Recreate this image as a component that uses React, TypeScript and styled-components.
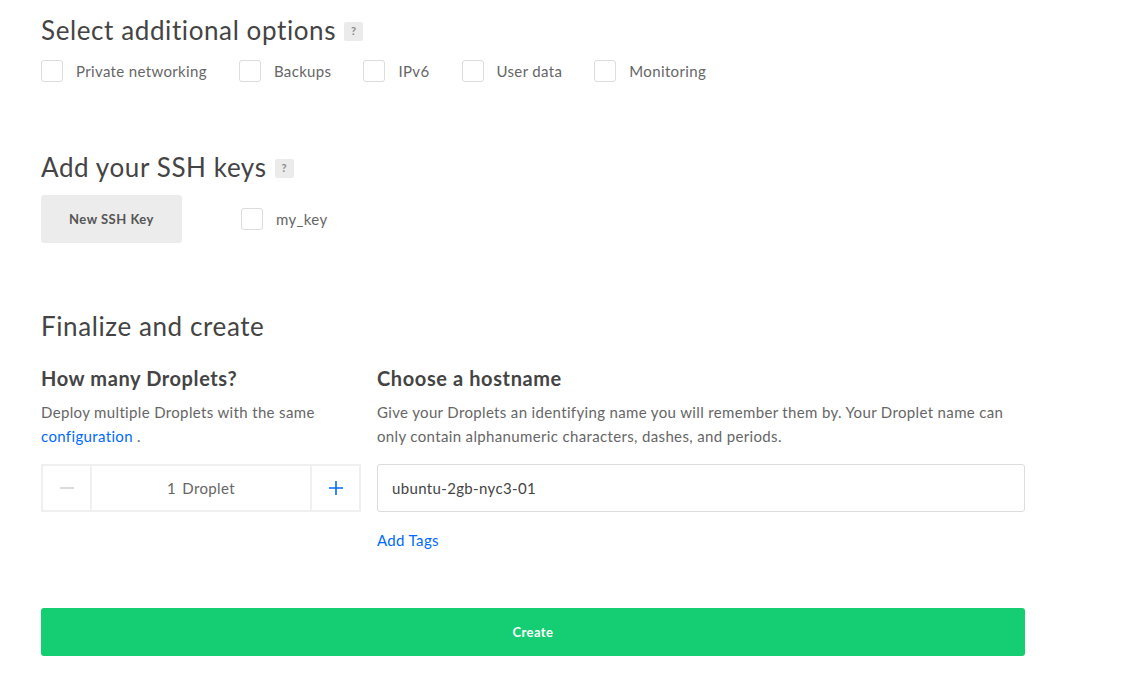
import React from "react";
import styled, { createGlobalStyle } from "styled-components";

const Global = createGlobalStyle`
  html, body { margin: 0; padding: 0; background: #fff; }
  body { font-family: Lato, "Open Sans", "Liberation Sans", sans-serif; color: #444; letter-spacing: 0.35px; }
  * { box-sizing: border-box; }
`;

const Page = styled.div`
  padding-left: 41px;
  width: 1025px;
  display: flex;
  flex-direction: column;
`;

const Title = styled.h2<{ $top: number }>`
  margin: ${(p) => p.$top}px 0 0;
  font-size: 26px;
  line-height: 32px;
  font-weight: 400;
  letter-spacing: 0.6px;
  color: #444;
  display: flex;
  align-items: center;
  gap: 8px;
`;

const Help = styled.span`
  display: inline-flex;
  align-items: center;
  justify-content: center;
  width: 19px;
  height: 19px;
  border-radius: 2px;
  background: #ebebeb;
  color: #8a8a8a;
  font-size: 11px;
  font-weight: 700;
  letter-spacing: 0;
  margin-top: 2px;
`;

const OptionRow = styled.div`
  margin-top: 14px;
  display: flex;
  gap: 32px;
  height: 22px;
`;

const Option = styled.label`
  display: flex;
  align-items: center;
  gap: 13px;
  font-size: 15px;
  color: #666;
`;

const Box = styled.span`
  width: 22px;
  height: 22px;
  border: 1px solid #dcdcdc;
  border-radius: 3px;
  background: #fff;
  flex: none;
`;

const KeyRow = styled.div`
  margin-top: 12px;
  display: flex;
  align-items: center;
  gap: 59px;
`;

const GreyButton = styled.button`
  width: 141px;
  height: 48px;
  border: none;
  border-radius: 3px;
  background: #ececec;
  color: #555;
  font-family: inherit;
  font-size: 13px;
  font-weight: 700;
  letter-spacing: 0.5px;
`;

const Columns = styled.div`
  margin-top: 24px;
  display: grid;
  grid-template-columns: 320px 648px;
  column-gap: 16px;
`;

const Col = styled.div`
  display: flex;
  flex-direction: column;
`;

const SubTitle = styled.h3`
  margin: 0;
  font-size: 20px;
  line-height: 24px;
  font-weight: 700;
  letter-spacing: 0.6px;
  color: #444;
`;

const Desc = styled.p`
  margin: 10px 0 0;
  font-size: 15px;
  line-height: 24px;
  color: #666;
`;

const Link = styled.a`
  color: #0069ff;
  text-decoration: none;
  cursor: pointer;
`;

const Stepper = styled.div`
  margin-top: 16px;
  height: 48px;
  display: grid;
  grid-template-columns: 49px 1fr 49px;
  border: 2px solid #f0f0f0;
`;

const StepBtn = styled.div<{ $side: "l" | "r" }>`
  display: flex;
  align-items: center;
  justify-content: center;
  ${(p) => (p.$side === "l" ? "border-right: 2px solid #f0f0f0;" : "border-left: 2px solid #f0f0f0;")}
`;

const StepValue = styled.div`
  display: flex;
  align-items: center;
  justify-content: center;
  font-size: 15px;
  color: #666;
  word-spacing: 2px;
`;

const HostInput = styled.div`
  margin-top: 16px;
  height: 48px;
  border: 1px solid #dcdcdc;
  border-radius: 3px;
  display: flex;
  align-items: center;
  padding-left: 14px;
  font-size: 15px;
  color: #444;
`;

const TagLink = styled(Link)`
  margin-top: 16px;
  font-size: 15px;
  line-height: 24px;
`;

const CreateButton = styled.button`
  margin-top: 56px;
  width: 984px;
  height: 48px;
  border: none;
  border-radius: 3px;
  background: #15cd72;
  color: #fff;
  font-family: inherit;
  font-size: 13px;
  font-weight: 700;
  letter-spacing: 0.4px;
`;

const options = ["Private networking", "Backups", "IPv6", "User data", "Monitoring"];

export default function App() {
  return (
    <>
      <Global />
      <Page>
        <Title $top={14}>
          Select additional options <Help>?</Help>
        </Title>
        <OptionRow>
          {options.map((o) => (
            <Option key={o}>
              <Box />
              {o}
            </Option>
          ))}
        </OptionRow>

        <Title $top={69}>
          Add your SSH keys <Help>?</Help>
        </Title>
        <KeyRow>
          <GreyButton>New SSH Key</GreyButton>
          <Option>
            <Box />
            my_key
          </Option>
        </KeyRow>

        <Title $top={67}>Finalize and create</Title>
        <Columns>
          <Col>
            <SubTitle>How many Droplets?</SubTitle>
            <Desc>
              Deploy multiple Droplets with the same
              <br />
              <Link>configuration</Link> .
            </Desc>
            <Stepper>
              <StepBtn $side="l">
                <svg width="16" height="16" viewBox="0 0 16 16">
                  <path d="M1 8h14" stroke="#cfcfcf" strokeWidth="1.5" />
                </svg>
              </StepBtn>
              <StepValue>1 Droplet</StepValue>
              <StepBtn $side="r">
                <svg width="16" height="16" viewBox="0 0 16 16">
                  <path d="M1 8h14M8 1v14" stroke="#0069ff" strokeWidth="1.6" />
                </svg>
              </StepBtn>
            </Stepper>
          </Col>
          <Col>
            <SubTitle>Choose a hostname</SubTitle>
            <Desc>
              Give your Droplets an identifying name you will remember them by. Your Droplet name can only contain
              alphanumeric characters, dashes, and periods.
            </Desc>
            <HostInput>ubuntu-2gb-nyc3-01</HostInput>
            <TagLink>Add Tags</TagLink>
          </Col>
        </Columns>
        <CreateButton>Create</CreateButton>
      </Page>
    </>
  );
}
